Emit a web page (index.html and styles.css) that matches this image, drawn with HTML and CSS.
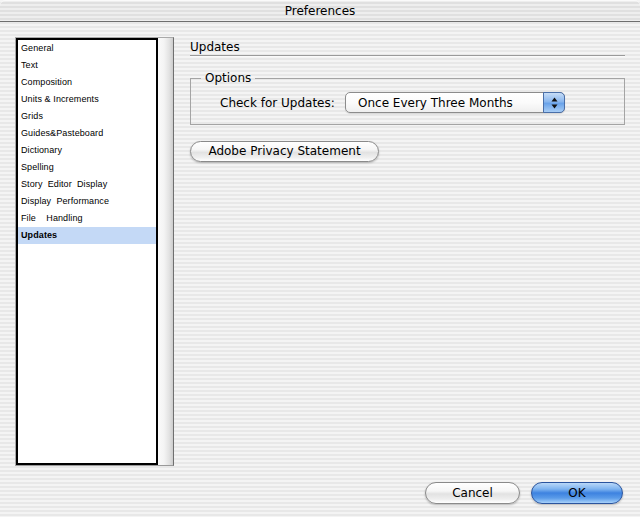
FILE: index.html
```html
<!DOCTYPE html>
<html>
<head>
<meta charset="utf-8">
<title>Preferences</title>
<link rel="stylesheet" href="styles.css">
</head>
<body>
<div class="window">
  <div class="titlebar">Preferences</div>
  <div class="main">
    <div class="sidebar">
      <ul class="list">
        <li>General</li>
        <li>Text</li>
        <li>Composition</li>
        <li>Units &amp; Increments</li>
        <li>Grids</li>
        <li>Guides&amp;Pasteboard</li>
        <li>Dictionary</li>
        <li>Spelling</li>
        <li>Story&nbsp; Editor&nbsp; Display</li>
        <li>Display&nbsp; Performance</li>
        <li>File&nbsp;&nbsp;&nbsp; Handling</li>
        <li class="selected">Updates</li>
      </ul>
      <div class="scroll"></div>
    </div>
    <div class="content">
      <div class="heading">Updates</div>
      <fieldset class="group">
        <legend>Options</legend>
        <div class="row">
          <span class="label">Check for Updates:</span>
          <div class="popup">
            <span class="popup-text">Once Every Three Months</span>
            <span class="popup-arrows">
              <svg width="7" height="12" viewBox="0 0 7 12"><path d="M3.5 0.5 L6.5 4.5 L0.5 4.5 Z" fill="#111"/><path d="M3.5 11.5 L6.5 7.5 L0.5 7.5 Z" fill="#111"/></svg>
            </span>
          </div>
        </div>
      </fieldset>
      <button class="btn privacy">Adobe Privacy Statement</button>
    </div>
  </div>
  <div class="footer">
    <button class="btn cancel">Cancel</button>
    <button class="btn ok">OK</button>
  </div>
</div>
</body>
</html>
```
FILE: styles.css
```css
html, body {
  margin: 0;
  padding: 0;
}
body {
  width: 640px;
  height: 517px;
  overflow: hidden;
  font-family: "DejaVu Sans", "Liberation Sans", sans-serif;
  font-size: 12px;
  color: #000;
}
.window {
  width: 640px;
  height: 517px;
  background: repeating-linear-gradient(to bottom, #f4f4f4 0, #f4f4f4 2px, #e8e8e8 2px, #e8e8e8 4px);
  display: flex;
  flex-direction: column;
}
.titlebar {
  height: 21px;
  line-height: 22px;
  text-align: center;
  font-size: 12px;
  border-bottom: 1px solid #6e6e6e;
  background: repeating-linear-gradient(to bottom, #eeeeee 0, #eeeeee 2px, #e0e0e0 2px, #e0e0e0 4px);
  border-radius: 5px 5px 0 0;
  box-shadow: inset 0 1px 0 #fafafa;
}
.main {
  display: flex;
  padding: 15px 0 0 15px;
}
.sidebar {
  width: 159px;
  height: 429px;
  box-sizing: border-box;
  border: 1px solid #a9a9a9;
  border-right-color: #6f6f6f;
  border-bottom-color: #9a9a9a;
  display: flex;
}
.list {
  list-style: none;
  margin: 0;
  padding: 0;
  width: 142px;
  box-sizing: border-box;
  border: 2px solid #000;
  background: #fff;
  font-family: "Liberation Sans", Arial, sans-serif;
  font-size: 9px;
}
.list li {
  height: 17px;
  line-height: 17px;
  padding-left: 3px;
  white-space: nowrap;
  letter-spacing: 0.1px;
}
.list li.selected {
  background: #c4d9f6;
  font-weight: bold;
}
.scroll {
  flex: 1;
  background: linear-gradient(to right, #fafafa 0, #f4f4f4 40%, #e2e2e2 75%, #cdcdcd 100%);
}
.content {
  margin-left: 16px;
  width: 435px;
  display: flex;
  flex-direction: column;
  align-items: flex-start;
}
.heading {
  align-self: stretch;
  font-size: 12px;
  line-height: 16px;
  padding-top: 2px;
  border-bottom: 1px solid #9a9a9a;
  box-shadow: 0 1px 0 #fafafa;
}
.group {
  align-self: stretch;
  margin: 14px 0 0 0;
  padding: 0 0 11px 0;
  border: 1px solid #a4a4a4;
  border-radius: 0;
  min-width: 0;
}
.group legend {
  margin-left: 10px;
  padding: 0 4px;
  font-size: 12px;
  line-height: 16px;
}
.row {
  display: flex;
  align-items: center;
  margin-top: 6px;
  padding-left: 29px;
}
.label {
  width: 125px;
  white-space: nowrap;
}
.popup {
  width: 220px;
  height: 21px;
  box-sizing: border-box;
  border: 1px solid #8c8c8c;
  border-radius: 5px;
  background: linear-gradient(to bottom, #ffffff 0, #fbfbfb 50%, #efefef 100%);
  display: flex;
  align-items: stretch;
  box-shadow: 0 1px 1px rgba(0,0,0,0.12);
}
.popup-text {
  flex: 1;
  padding-left: 12px;
  line-height: 20px;
  white-space: nowrap;
}
.popup-arrows {
  width: 20px;
  margin: -1px -1px -1px 0;
  border: 1px solid #4a6fa8;
  border-radius: 0 5px 5px 0;
  background: linear-gradient(to bottom, #c7ddf7 0, #8ab7ee 45%, #6aa3ea 55%, #a8cdf5 100%);
  display: flex;
  align-items: center;
  justify-content: center;
}
.popup-arrows svg {
  display: block;
}
.btn {
  font-family: "DejaVu Sans", "Liberation Sans", sans-serif;
  font-size: 12px;
  color: #000;
  height: 21px;
  box-sizing: border-box;
  padding: 0;
  border: 1px solid #8a8a8a;
  border-radius: 11px;
  background: linear-gradient(to bottom, #ffffff 0, #f6f6f6 40%, #e2e2e2 55%, #eeeeee 80%, #ffffff 100%);
  box-shadow: 0 1px 2px rgba(0,0,0,0.25);
  line-height: 19px;
  text-align: center;
}
.privacy {
  margin-top: 16px;
  width: 189px;
}
.footer {
  display: flex;
  justify-content: flex-end;
  gap: 11px;
  padding: 16px 17px 0 0;
}
.cancel {
  width: 95px;
  height: 22px;
}
.ok {
  width: 92px;
  height: 22px;
  border-color: #2a549e;
  background: linear-gradient(to bottom, #b9d8f8 0, #7fb4f0 30%, #3d82e0 50%, #5a9be9 75%, #a7d1fa 100%);
}
```
